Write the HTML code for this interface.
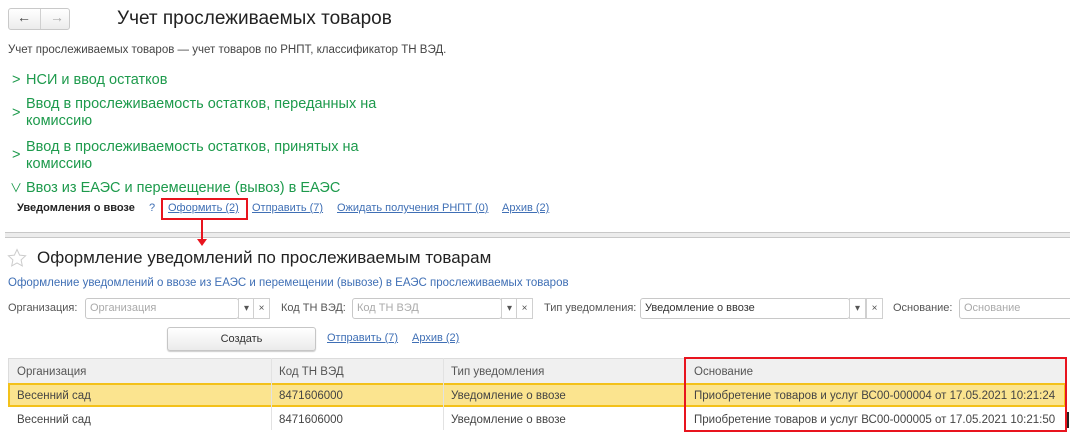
<!DOCTYPE html>
<html><head><meta charset="utf-8"><style>
*{margin:0;padding:0;box-sizing:border-box}
body{width:1070px;height:440px;background:#fff;font-family:"Liberation Sans","Noto Sans CJK SC",sans-serif;position:relative;overflow:hidden;color:#333}
.a{position:absolute;white-space:nowrap}
.g{color:#1d9a4c;font-size:14.5px}
.lnk{color:#3f6fb5;text-decoration:underline;font-size:11px}
.lbl{color:#555;font-size:11px}
.inp{position:absolute;height:21px;border:1px solid #c8c8c8;border-radius:3px;background:#fff;font-size:11px;color:#aaa;padding:3px 4px}
.btn{position:absolute;width:17px;height:21px;border:1px solid #d0d0d0;font-size:10px;color:#555;text-align:center;line-height:19px;background:#fff}
.cell{position:absolute;font-size:11.5px;color:#444}
</style></head><body>
<div class="a" style="left:8px;top:8px;width:62px;height:22px;border:1px solid #c9c9c9;border-radius:3px;background:linear-gradient(#fff,#ececec)"></div>
<div class="a" style="left:40px;top:9px;width:1px;height:20px;background:#d0d0d0"></div>
<div class="a" style="left:17px;top:9px;font-size:14px;color:#444">&#8592;</div>
<div class="a" style="left:50px;top:9px;font-size:14px;color:#aaa">&#8594;</div>
<div class="a" style="left:117px;top:8px;font-size:19px;color:#222">Учет прослеживаемых товаров</div>
<div class="a" style="left:8px;top:44px;font-size:11.5px;color:#444">Учет прослеживаемых товаров — учет товаров по РНПТ, классификатор ТН ВЭД.</div>

<div class="a g" style="left:12px;top:72px">&gt;</div>
<div class="a g" style="left:26px;top:72px">НСИ и ввод остатков</div>
<div class="a g" style="left:12px;top:105px">&gt;</div>
<div class="a g" style="left:26px;top:96px;line-height:17px">Ввод в прослеживаемость остатков, переданных на<br>комиссию</div>
<div class="a g" style="left:12px;top:147px">&gt;</div>
<div class="a g" style="left:26px;top:139px;line-height:17px">Ввод в прослеживаемость остатков, принятых на<br>комиссию</div>
<div class="a g" style="left:10px;top:179px;font-size:12px">&#8744;</div>
<div class="a g" style="left:26px;top:180px">Ввоз из ЕАЭС и перемещение (вывоз) в ЕАЭС</div>

<div class="a" style="left:17px;top:202px;font-size:11px;font-weight:bold;color:#222">Уведомления о ввозе</div>
<div class="a" style="left:149px;top:202px;font-size:11px;color:#3f6fb5">?</div>
<div class="a lnk" style="left:168px;top:202px">Оформить (2)</div>
<div class="a lnk" style="left:252px;top:202px">Отправить (7)</div>
<div class="a lnk" style="left:337px;top:202px">Ожидать получения РНПТ (0)</div>
<div class="a lnk" style="left:502px;top:202px">Архив (2)</div>
<div class="a" style="left:161px;top:198px;width:87px;height:22px;border:2px solid #e8141e"></div>

<div class="a" style="left:5px;top:232px;width:1065px;height:6px;background:#ececec;border-top:1px solid #c8c8c8;border-bottom:1px solid #c8c8c8"></div>
<div class="a" style="left:201px;top:220px;width:2px;height:20px;background:#e8141e"></div>
<div class="a" style="left:197px;top:239px;width:0;height:0;border-left:5px solid transparent;border-right:5px solid transparent;border-top:7px solid #e8141e"></div>

<svg class="a" style="left:7px;top:248px" width="20" height="20" viewBox="0 0 20 20"><path d="M10 1.5l2.6 5.6 6 .7-4.5 4.1 1.2 6-5.3-3-5.3 3 1.2-6L1.4 7.8l6-.7z" fill="none" stroke="#ccc" stroke-width="1"/></svg>
<div class="a" style="left:37px;top:248px;font-size:17px;color:#222">Оформление уведомлений по прослеживаемым товарам</div>
<div class="a" style="left:8px;top:277px;font-size:11.5px;color:#3f6fb5">Оформление уведомлений о ввозе из ЕАЭС и перемещении (вывозе) в ЕАЭС прослеживаемых товаров</div>

<div class="a lbl" style="left:8px;top:302px">Организация:</div>
<div class="inp" style="left:85px;top:298px;width:154px">Организация</div>
<div class="btn" style="left:238px;top:298px">&#9662;</div>
<div class="btn" style="left:253px;top:298px">×</div>
<div class="a lbl" style="left:281px;top:302px">Код ТН ВЭД:</div>
<div class="inp" style="left:352px;top:298px;width:150px">Код ТН ВЭД</div>
<div class="btn" style="left:501px;top:298px">&#9662;</div>
<div class="btn" style="left:516px;top:298px">×</div>
<div class="a lbl" style="left:544px;top:302px">Тип уведомления:</div>
<div class="inp" style="left:640px;top:298px;width:210px;color:#333">Уведомление о ввозе</div>
<div class="btn" style="left:849px;top:298px">&#9662;</div>
<div class="btn" style="left:866px;top:298px">×</div>
<div class="a lbl" style="left:893px;top:302px">Основание:</div>
<div class="inp" style="left:959px;top:298px;width:120px">Основание</div>

<div class="a" style="left:167px;top:327px;width:149px;height:24px;border:1px solid #c6c6c6;border-radius:3px;background:linear-gradient(#fff,#ebebeb);text-align:center;line-height:22px;font-size:11px;color:#333;box-shadow:0 1px 1px #ccc">Создать</div>
<div class="a lnk" style="left:327px;top:332px">Отправить (7)</div>
<div class="a lnk" style="left:412px;top:332px">Архив (2)</div>

<div class="a" style="left:8px;top:358px;width:1058px;height:26px;background:#f0f0f0;border:1px solid #dcdcdc"></div>
<div class="a" style="left:8px;top:383px;width:1058px;height:24px;background:#fbe48f;border:2px solid #f3c11a"></div>
<div class="a" style="left:271px;top:358px;width:1px;height:72px;background:#e2e2e2"></div>
<div class="a" style="left:443px;top:358px;width:1px;height:72px;background:#e2e2e2"></div>
<div class="cell" style="left:17px;top:366px;color:#555">Организация</div>
<div class="cell" style="left:279px;top:366px;color:#555">Код ТН ВЭД</div>
<div class="cell" style="left:451px;top:366px;color:#555">Тип уведомления</div>
<div class="cell" style="left:694px;top:366px;color:#555">Основание</div>
<div class="cell" style="left:17px;top:390px">Весенний сад</div>
<div class="cell" style="left:279px;top:390px">8471606000</div>
<div class="cell" style="left:451px;top:390px">Уведомление о ввозе</div>
<div class="cell" style="left:694px;top:390px">Приобретение товаров и услуг ВС00-000004 от 17.05.2021 10:21:24</div>
<div class="cell" style="left:17px;top:414px">Весенний сад</div>
<div class="cell" style="left:279px;top:414px">8471606000</div>
<div class="cell" style="left:451px;top:414px">Уведомление о ввозе</div>
<div class="cell" style="left:694px;top:414px">Приобретение товаров и услуг ВС00-000005 от 17.05.2021 10:21:50</div>
<div class="a" style="left:684px;top:357px;width:383px;height:75px;border:2px solid #e8141e"></div>
<div class="a" style="left:1067px;top:412px;width:2px;height:16px;background:#222"></div>
</body></html>
